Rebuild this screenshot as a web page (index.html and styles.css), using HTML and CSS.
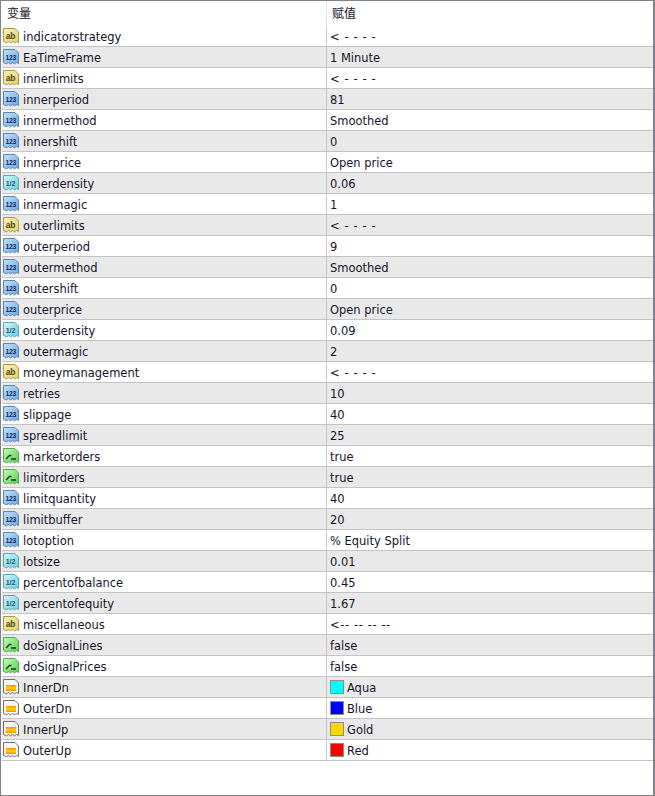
FILE: index.html
```html
<!DOCTYPE html>
<html lang="zh">
<head>
<meta charset="utf-8">
<title>变量</title>
<link rel="stylesheet" href="styles.css">
</head>
<body>
<svg class="defs" width="0" height="0" aria-hidden="true">
  <defs>
    <linearGradient id="gy" x1="0" y1="0" x2="1" y2="1"><stop offset="0" stop-color="#f8f2bc"/><stop offset="1" stop-color="#e4d068"/></linearGradient>
    <linearGradient id="gb" x1="0" y1="0" x2="1" y2="1"><stop offset="0" stop-color="#c4e0f8"/><stop offset="1" stop-color="#6ca8e4"/></linearGradient>
    <linearGradient id="gc" x1="0" y1="0" x2="1" y2="1"><stop offset="0" stop-color="#d0f6f8"/><stop offset="1" stop-color="#68d0e0"/></linearGradient>
    <linearGradient id="gg" x1="0" y1="0" x2="1" y2="1"><stop offset="0" stop-color="#c8f8b8"/><stop offset="1" stop-color="#58d050"/></linearGradient>
    <linearGradient id="go" x1="0" y1="0" x2="0" y2="1"><stop offset="0" stop-color="#ff8c00"/><stop offset="0.5" stop-color="#ffd800"/><stop offset="1" stop-color="#ff8c00"/></linearGradient>
    <path id="sheet" d="M0.5 0.5 H12 L15.5 4 V14.5 L13.5 13.5 L11.5 14.8 L9.5 13.5 L7.5 14.8 L5.5 13.5 L3.5 14.8 L0.5 13.5 Z"/>
    <symbol id="i-ab" viewBox="0 0 16 16"><use href="#sheet" fill="url(#gy)" stroke="#a8984c"/><text x="7.6" y="11" class="ig ig-ab">ab</text></symbol>
    <symbol id="i-123" viewBox="0 0 16 16"><use href="#sheet" fill="url(#gb)" stroke="#5c84b4"/><text x="7.8" y="11" class="ig ig-n">123</text></symbol>
    <symbol id="i-half" viewBox="0 0 16 16"><use href="#sheet" fill="url(#gc)" stroke="#58a8b8"/><text x="7.6" y="11" class="ig ig-h">1/2</text></symbol>
    <symbol id="i-bool" viewBox="0 0 16 16"><use href="#sheet" fill="url(#gg)" stroke="#58a858"/><path d="M3 11 L6.5 7.5 H8.5 M8 11 H13" fill="none" stroke="#143c1c" stroke-width="1.4"/></symbol>
    <symbol id="i-color" viewBox="0 0 16 16"><use href="#sheet" fill="#f6f6f6" stroke="#707070"/><rect x="3" y="6" width="10" height="6" fill="url(#go)"/></symbol>
  </defs>
</svg>
<main class="window">
  <div class="head">
    <div class="cell name-h">变量</div>
    <div class="cell val-h">赋值</div>
  </div>
  <div class="rows">
    <div class="row"><div class="cell name"><svg class="ico"><use href="#i-ab"/></svg>indicatorstrategy</div><div class="cell val dash">&lt; - - - -</div></div>
    <div class="row"><div class="cell name"><svg class="ico"><use href="#i-123"/></svg>EaTimeFrame</div><div class="cell val">1 Minute</div></div>
    <div class="row"><div class="cell name"><svg class="ico"><use href="#i-ab"/></svg>innerlimits</div><div class="cell val dash">&lt; - - - -</div></div>
    <div class="row"><div class="cell name"><svg class="ico"><use href="#i-123"/></svg>innerperiod</div><div class="cell val">81</div></div>
    <div class="row"><div class="cell name"><svg class="ico"><use href="#i-123"/></svg>innermethod</div><div class="cell val">Smoothed</div></div>
    <div class="row"><div class="cell name"><svg class="ico"><use href="#i-123"/></svg>innershift</div><div class="cell val">0</div></div>
    <div class="row"><div class="cell name"><svg class="ico"><use href="#i-123"/></svg>innerprice</div><div class="cell val">Open price</div></div>
    <div class="row"><div class="cell name"><svg class="ico"><use href="#i-half"/></svg>innerdensity</div><div class="cell val">0.06</div></div>
    <div class="row"><div class="cell name"><svg class="ico"><use href="#i-123"/></svg>innermagic</div><div class="cell val">1</div></div>
    <div class="row"><div class="cell name"><svg class="ico"><use href="#i-ab"/></svg>outerlimits</div><div class="cell val dash">&lt; - - - -</div></div>
    <div class="row"><div class="cell name"><svg class="ico"><use href="#i-123"/></svg>outerperiod</div><div class="cell val">9</div></div>
    <div class="row"><div class="cell name"><svg class="ico"><use href="#i-123"/></svg>outermethod</div><div class="cell val">Smoothed</div></div>
    <div class="row"><div class="cell name"><svg class="ico"><use href="#i-123"/></svg>outershift</div><div class="cell val">0</div></div>
    <div class="row"><div class="cell name"><svg class="ico"><use href="#i-123"/></svg>outerprice</div><div class="cell val">Open price</div></div>
    <div class="row"><div class="cell name"><svg class="ico"><use href="#i-half"/></svg>outerdensity</div><div class="cell val">0.09</div></div>
    <div class="row"><div class="cell name"><svg class="ico"><use href="#i-123"/></svg>outermagic</div><div class="cell val">2</div></div>
    <div class="row"><div class="cell name"><svg class="ico"><use href="#i-ab"/></svg>moneymanagement</div><div class="cell val dash">&lt; - - - -</div></div>
    <div class="row"><div class="cell name"><svg class="ico"><use href="#i-123"/></svg>retries</div><div class="cell val">10</div></div>
    <div class="row"><div class="cell name"><svg class="ico"><use href="#i-123"/></svg>slippage</div><div class="cell val">40</div></div>
    <div class="row"><div class="cell name"><svg class="ico"><use href="#i-123"/></svg>spreadlimit</div><div class="cell val">25</div></div>
    <div class="row"><div class="cell name"><svg class="ico"><use href="#i-bool"/></svg>marketorders</div><div class="cell val">true</div></div>
    <div class="row"><div class="cell name"><svg class="ico"><use href="#i-bool"/></svg>limitorders</div><div class="cell val">true</div></div>
    <div class="row"><div class="cell name"><svg class="ico"><use href="#i-123"/></svg>limitquantity</div><div class="cell val">40</div></div>
    <div class="row"><div class="cell name"><svg class="ico"><use href="#i-123"/></svg>limitbuffer</div><div class="cell val">20</div></div>
    <div class="row"><div class="cell name"><svg class="ico"><use href="#i-123"/></svg>lotoption</div><div class="cell val">% Equity Split</div></div>
    <div class="row"><div class="cell name"><svg class="ico"><use href="#i-half"/></svg>lotsize</div><div class="cell val">0.01</div></div>
    <div class="row"><div class="cell name"><svg class="ico"><use href="#i-half"/></svg>percentofbalance</div><div class="cell val">0.45</div></div>
    <div class="row"><div class="cell name"><svg class="ico"><use href="#i-half"/></svg>percentofequity</div><div class="cell val">1.67</div></div>
    <div class="row"><div class="cell name"><svg class="ico"><use href="#i-ab"/></svg>miscellaneous</div><div class="cell val dash">&lt;-- -- -- --</div></div>
    <div class="row"><div class="cell name"><svg class="ico"><use href="#i-bool"/></svg>doSignalLines</div><div class="cell val">false</div></div>
    <div class="row"><div class="cell name"><svg class="ico"><use href="#i-bool"/></svg>doSignalPrices</div><div class="cell val">false</div></div>
    <div class="row"><div class="cell name"><svg class="ico"><use href="#i-color"/></svg>InnerDn</div><div class="cell val"><span class="sw sw-aqua"></span>Aqua</div></div>
    <div class="row"><div class="cell name"><svg class="ico"><use href="#i-color"/></svg>OuterDn</div><div class="cell val"><span class="sw sw-blue"></span>Blue</div></div>
    <div class="row"><div class="cell name"><svg class="ico"><use href="#i-color"/></svg>InnerUp</div><div class="cell val"><span class="sw sw-gold"></span>Gold</div></div>
    <div class="row"><div class="cell name"><svg class="ico"><use href="#i-color"/></svg>OuterUp</div><div class="cell val"><span class="sw sw-red"></span>Red</div></div>
  </div>
</main>
</body>
</html>
```
FILE: styles.css
```css
* { box-sizing: border-box; }
html, body { margin: 0; padding: 0; background: #fff; }
.defs { position: absolute; }
.window {
  width: 655px;
  height: 796px;
  border: 1px solid #7f8389;
  border-right-width: 2px;
  padding-left: 1px;
  background: #fff;
  font-family: "DejaVu Sans Condensed", "DejaVu Sans", "Noto Sans CJK SC", sans-serif;
  font-stretch: condensed;
  font-size: 12.75px;
  color: #14142a;
}
.head, .row { display: grid; grid-template-columns: 324px 1fr; }
.head { height: 25px; }
.cell { display: flex; align-items: center; white-space: nowrap; }
.name-h, .val-h {
  padding-left: 5px;
  padding-bottom: 2px;
  font-family: "Noto Sans CJK SC", sans-serif;
  font-size: 12px;
}
.val-h { border-left: 1px solid #e4e4e4; }
.row { height: 21px; border-bottom: 1px solid #c4c4c4; }
.row:nth-child(even) { background: #e9e9e9; }
.name { gap: 4px; }
.ico { width: 16px; height: 16px; margin-left: 1px; flex: none; display: block; }
.val { padding-left: 3px; border-left: 1px solid #c8c8c8; }
.dash { letter-spacing: 0.6px; }
.ig { font-family: "Liberation Sans", sans-serif; text-anchor: middle; font-weight: 700; }
.ig-ab { font-size: 8.5px; fill: #4c4410; }
.ig-n { font-size: 6.8px; letter-spacing: -0.2px; fill: #0c2c5c; }
.ig-h { font-size: 7px; fill: #1c5468; }
.sw { width: 14px; height: 14px; border: 1px solid #8c8c8c; margin-right: 3px; flex: none; }
.sw-aqua { background: #00ffff; }
.sw-blue { background: #0000ff; }
.sw-gold { background: #ffd700; }
.sw-red { background: #ff0000; }
```
